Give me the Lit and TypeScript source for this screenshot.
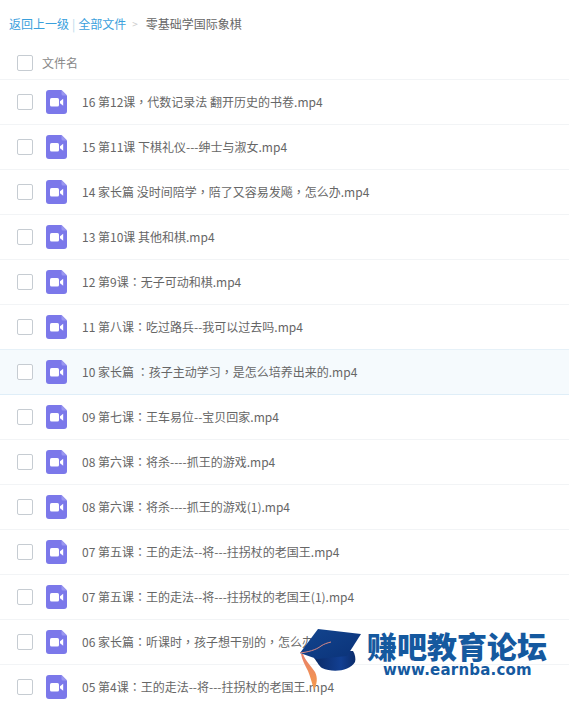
import { LitElement, html, css, svg } from "lit";
import { customElement } from "lit/decorators.js";

const FILES = [
  "16 第12课，代数记录法 翻开历史的书卷.mp4",
  "15 第11课 下棋礼仪---绅士与淑女.mp4",
  "14 家长篇 没时间陪学，陪了又容易发飚，怎么办.mp4",
  "13 第10课 其他和棋.mp4",
  "12 第9课：无子可动和棋.mp4",
  "11 第八课：吃过路兵--我可以过去吗.mp4",
  "10 家长篇 ：孩子主动学习，是怎么培养出来的.mp4",
  "09 第七课：王车易位--宝贝回家.mp4",
  "08 第六课：将杀----抓王的游戏.mp4",
  "08 第六课：将杀----抓王的游戏(1).mp4",
  "07 第五课：王的走法--将---拄拐杖的老国王.mp4",
  "07 第五课：王的走法--将---拄拐杖的老国王(1).mp4",
  "06 家长篇：听课时，孩子想干别的，怎么办.mp4",
  "05 第4课：王的走法--将---拄拐杖的老国王.mp4",
];

const videoIcon = svg`<svg class="icon" viewBox="0 0 21 24" width="21" height="24" aria-hidden="true">
  <path d="M3 0H15.5L21 5.5V21a3 3 0 0 1-3 3H3a3 3 0 0 1-3-3V3a3 3 0 0 1 3-3Z" fill="#7b78ea"/>
  <path d="M15.5 0L21 5.5H17a1.5 1.5 0 0 1-1.5-1.5Z" fill="#9a97f0"/>
  <rect x="4" y="8" width="9" height="8.5" rx="1.6" fill="#fff"/>
  <path d="M14 11.2L17.2 8.8V15.7L14 13.3Z" fill="#fff"/>
</svg>`;

const cap = svg`<svg class="cap" viewBox="0 0 64 64" width="64" height="64" aria-hidden="true">
  <defs>
    <linearGradient id="capTop" x1="0" y1="0" x2="1" y2="1">
      <stop offset="0" stop-color="#12458f"/><stop offset="1" stop-color="#0b3278"/>
    </linearGradient>
    <linearGradient id="capBase" x1="0" y1="0" x2="1" y2="0">
      <stop offset="0" stop-color="#0a2a66"/><stop offset="0.65" stop-color="#123f92"/><stop offset="1" stop-color="#0b2c6b"/>
    </linearGradient>
    <linearGradient id="tassel" x1="0" y1="0" x2="0" y2="1">
      <stop offset="0" stop-color="#e8806a"/><stop offset="1" stop-color="#f59a4a"/>
    </linearGradient>
  </defs>
  <path d="M15 31C19 36 20 39 23 41C34 46 51 44 56 35C57 32 56 27 54 24L30 24Z" fill="url(#capBase)"/>
  <path d="M1 26L19 2L62 7L48 29L18 32Z" fill="url(#capTop)"/>
  <path d="M1 26C9 25 17 23 22 19C25 17 28 16 32 15" fill="none" stroke="#d98a86" stroke-width="1"/>
  <path d="M2 27C3 33 6 38 9 44C11 49 13 56 15 63C18 57 19 51 16 45C12 39 6 33 4 27Z" fill="url(#tassel)"/>
</svg>`;

const withPunct = (name: string) =>
  name
    .split(/([，：])/)
    .map((part) =>
      part === "，" || part === "：" ? html`<span class="punct">${part}</span>` : part
    );

@customElement("app-root")
export class AppRoot extends LitElement {
  static styles = css`
    :host {
      display: block;
      position: relative;
      width: 569px;
      height: 703px;
      overflow: hidden;
      background: #fff;
      font-family: "Microsoft YaHei", "Noto Sans CJK SC", "Noto Sans", sans-serif;
      font-size: 12px;
      color: #666;
    }
    .crumbs {
      display: flex;
      align-items: center;
      height: 16px;
      padding: 16px 0 0 9px;
      color: #666;
      line-height: 16px;
    }
    .crumbs a { color: #3aa0dc; text-decoration: none; }
    .crumbs .bar { color: #b8d8ec; margin: 0 3px 0 3px; }
    .crumbs .gt { color: #ccc; margin: 0 8px 0 6px; font-size: 10px; }
    .head, .row {
      display: flex;
      align-items: center;
      box-sizing: border-box;
      padding-left: 17px;
    }
    .head {
      height: 48px;
      padding-top: 14px;
      color: #888;
      border-bottom: 1px solid #f2f4f6;
    }
    .head .label { margin-left: 9px; padding-bottom: 1px; }
    .row {
      height: 45px;
      border-bottom: 1px solid #f2f4f6;
    }
    .row.hover {
      background: #f5fafd;
      border-bottom-color: #dfeef8;
      box-shadow: 0 -1px 0 #e6f1f8;
    }
    .check {
      width: 14px;
      height: 14px;
      flex: none;
      border: 1px solid #c6ccd2;
      border-radius: 2px;
      background: #fff;
    }
    .icon { flex: none; margin-left: 13px; }
    .name { margin-left: 15px; padding-bottom: 2px; white-space: nowrap; color: #666; }
    .punct { font-family: "Noto Sans CJK TC", sans-serif; }
    .mark {
      position: absolute;
      left: 299px;
      top: 627px;
      width: 260px;
      height: 64px;
    }
    .cap { position: absolute; left: 0; top: 0; }
    .brand {
      position: absolute;
      left: 68px;
      top: 1px;
      font-family: "Noto Sans CJK SC", sans-serif;
      font-weight: 900;
      font-size: 30px;
      line-height: 34px;
      color: #15599f;
      white-space: nowrap;
    }
    .url {
      position: absolute;
      left: 84px;
      top: 33px;
      font-family: "DejaVu Sans", sans-serif;
      font-weight: 700;
      font-size: 15px;
      line-height: 20px;
      letter-spacing: 0.2px;
      color: #15599f;
      white-space: nowrap;
    }
  `;

  render() {
    return html`
      <div class="crumbs">
        <a>返回上一级</a><span class="bar">|</span><a>全部文件</a><span class="gt">&gt;</span><span>零基础学国际象棋</span>
      </div>
      <div class="head"><span class="check"></span><span class="label">文件名</span></div>
      ${FILES.map(
        (f, i) => html`<div class="row ${i === 6 ? "hover" : ""}">
          <span class="check"></span>${videoIcon}<span class="name">${withPunct(f)}</span>
        </div>`
      )}
      <div class="mark">
        ${cap}
        <div class="brand">赚吧教育论坛</div>
        <div class="url">www.earnba.com</div>
      </div>
    `;
  }
}
